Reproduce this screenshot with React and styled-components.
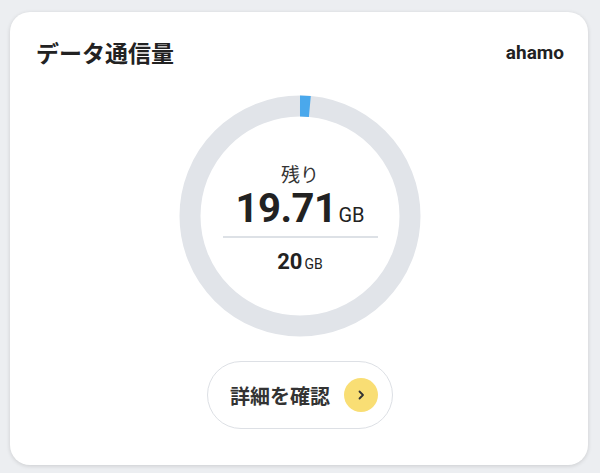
import React from 'react';
import styled, { createGlobalStyle } from 'styled-components';

const GlobalStyle = createGlobalStyle`
  body {
    margin: 0;
    background: #eceef1;
    font-family: Roboto, "Noto Sans CJK JP", sans-serif;
    color: #222;
  }
`;

const total = 20;
const remaining = 19.71;

const Page = () => {
  const r = 110;
  const circ = 2 * Math.PI * r;
  const used = ((total - remaining) / total) * circ;

  return (
    <>
      <GlobalStyle />
      <Wrap>
        <Card>
          <Header>
            <Title>データ通信量</Title>
            <Brand>ahamo</Brand>
          </Header>

          <Gauge>
            <Ring width="242" height="242" viewBox="0 0 242 242">
              <circle cx="121" cy="121" r={r} fill="none" stroke="#e1e4e9" strokeWidth="21" />
              <circle
                cx="121"
                cy="121"
                r={r}
                fill="none"
                stroke="#4aa8ec"
                strokeWidth="21"
                strokeDasharray={`${used} ${circ}`}
                transform="rotate(-90 121 121)"
              />
            </Ring>
            <GaugeText>
              <Label>残り</Label>
              <Amount>
                <Big>19.71</Big>
                <Unit size={20}>GB</Unit>
              </Amount>
              <Divider />
              <Amount>
                <Small>20</Small>
                <Unit size={14}>GB</Unit>
              </Amount>
            </GaugeText>
          </Gauge>

          <DetailButton>
            <span>詳細を確認</span>
            <Arrow>
              <svg width="12" height="12" viewBox="0 0 12 12">
                <path d="M4.5 2.5 L8 6 L4.5 9.5" fill="none" stroke="#333" strokeWidth="1.8" strokeLinecap="round" strokeLinejoin="round" />
              </svg>
            </Arrow>
          </DetailButton>
        </Card>
      </Wrap>
    </>
  );
};

const Wrap = styled.div`
  padding: 12px 12px 8px 10px;
`;

const Card = styled.div`
  width: 578px;
  height: 453px;
  box-sizing: border-box;
  background: #fff;
  border-radius: 20px;
  box-shadow: 0 1px 4px rgba(0, 0, 0, 0.14);
  padding: 26px 24px 0 26px;
  display: flex;
  flex-direction: column;
  align-items: center;
`;

const Header = styled.div`
  width: 100%;
  height: 28px;
  display: flex;
  justify-content: space-between;
  align-items: center;
`;

const Title = styled.h2`
  margin: 0;
  font-family: "Noto Sans CJK JP", sans-serif;
  font-size: 23px;
  font-weight: 700;
  color: #222;
  line-height: 28px;
`;

const Brand = styled.span`
  font-family: Roboto, sans-serif;
  font-size: 19px;
  font-weight: 700;
  color: #222;
`;

const Gauge = styled.div`
  margin-top: 29px;
  display: grid;
  width: 242px;
  height: 242px;
  & > * {
    grid-area: 1 / 1;
  }
`;

const Ring = styled.svg`
  display: block;
`;

const GaugeText = styled.div`
  display: flex;
  flex-direction: column;
  align-items: center;
  padding-top: 67px;
`;

const Label = styled.div`
  font-family: "Noto Sans CJK JP", sans-serif;
  font-size: 19px;
  line-height: 24px;
  color: #333;
`;

const Amount = styled.div`
  display: flex;
  align-items: baseline;
  color: #222;
`;

const Big = styled.span`
  font-size: 40px;
  font-weight: 700;
  line-height: 46px;
  letter-spacing: -0.5px;
`;

const Small = styled.span`
  font-size: 22px;
  font-weight: 700;
  line-height: 26px;
`;

const Unit = styled.span`
  font-size: ${p => p.size}px;
  font-weight: 400;
  margin-left: 2px;
`;

const Divider = styled.div`
  width: 155px;
  height: 2px;
  background: #dde1e6;
  margin: 4px 0 11px;
`;

const DetailButton = styled.button`
  margin-top: 24px;
  width: 186px;
  height: 68px;
  box-sizing: border-box;
  border: 1px solid #dde0e5;
  border-radius: 34px;
  background: #fff;
  display: flex;
  align-items: center;
  justify-content: space-between;
  padding: 0 14px 0 22px;
  font-family: "Noto Sans CJK JP", sans-serif;
  font-size: 20px;
  font-weight: 700;
  color: #333;
`;

const Arrow = styled.span`
  width: 34px;
  height: 34px;
  border-radius: 50%;
  background: #f9de74;
  display: flex;
  align-items: center;
  justify-content: center;
`;

export default Page;
